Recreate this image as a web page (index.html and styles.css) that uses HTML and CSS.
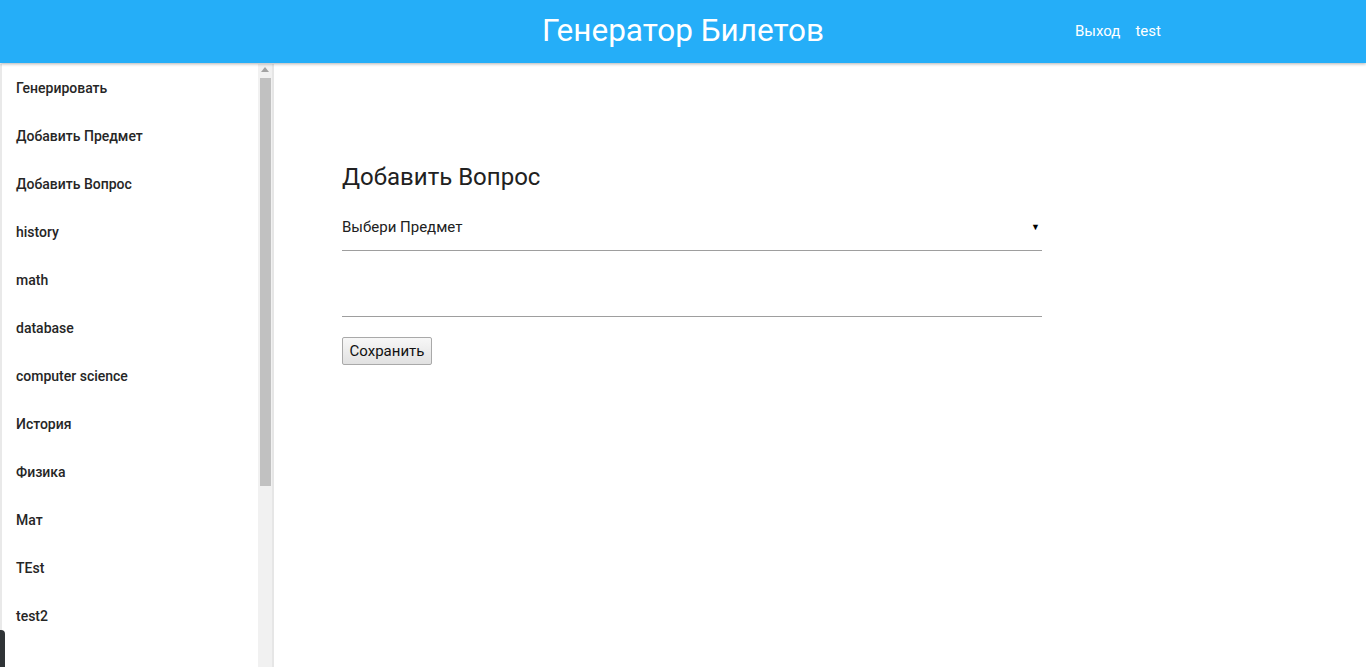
FILE: index.html
```html
<!DOCTYPE html>
<html lang="ru">
<head>
<meta charset="utf-8">
<title>Генератор Билетов</title>
<link rel="stylesheet" href="styles.css">
</head>
<body>
<header class="topbar">
  <div class="title">Генератор Билетов</div>
  <nav class="user-nav">
    <a class="nav-link" href="#">Выход</a>
    <span class="nav-link">test</span>
  </nav>
</header>
<div class="layout">
  <aside class="sidebar">
    <ul class="menu">
      <li class="menu-item">Генерировать</li>
      <li class="menu-item">Добавить Предмет</li>
      <li class="menu-item">Добавить Вопрос</li>
      <li class="menu-item">history</li>
      <li class="menu-item">math</li>
      <li class="menu-item">database</li>
      <li class="menu-item">computer science</li>
      <li class="menu-item">История</li>
      <li class="menu-item">Физика</li>
      <li class="menu-item">Мат</li>
      <li class="menu-item">TEst</li>
      <li class="menu-item">test2</li>
    </ul>
    <div class="scrollbar">
      <div class="scroll-up"></div>
      <div class="scroll-thumb"></div>
    </div>
  </aside>
  <main class="content">
    <h1 class="heading">Добавить Вопрос</h1>
    <div class="select-field">
      <span class="select-label">Выбери Предмет</span>
      <span class="select-arrow">▼</span>
    </div>
    <div class="text-field"></div>
    <button class="save-btn">Сохранить</button>
  </main>
</div>
<div class="corner-tab"></div>
</body>
</html>
```

FILE: styles.css
```css
* { box-sizing: border-box; }
html, body { margin: 0; padding: 0; height: 100%; overflow: hidden; }
body {
  font-family: Roboto, "Liberation Sans", Arial, sans-serif;
  color: #212121;
  background: #fff;
}
.topbar {
  height: 63px;
  background: #25aef8;
  color: #fff;
  display: flex;
  align-items: center;
  justify-content: center;
  position: relative;
  box-shadow: 0 1px 3px rgba(0,0,0,0.3);
  z-index: 2;
}
.title {
  font-size: 31.5px;
  font-weight: 400;
  margin-top: -2px;
}
.user-nav {
  position: absolute;
  left: 1075px;
  top: 0;
  height: 63px;
  display: flex;
  align-items: center;
  gap: 15px;
  font-size: 15px;
  margin-top: -1px;
}
.nav-link { color: #fff; text-decoration: none; }
.layout {
  display: flex;
  height: 604px;
  margin-top: 1px;
}
.sidebar {
  width: 274px;
  flex: none;
  display: flex;
  border-left: 2px solid #e9e9e9;
  border-right: 2px solid #e6e6e6;
  overflow: hidden;
}
.menu {
  list-style: none;
  margin: 0;
  padding: 0;
  flex: 1;
}
.menu-item {
  height: 48px;
  display: flex;
  align-items: center;
  padding-left: 14px;
  font-size: 14px;
  font-weight: 500;
  color: #262626;
}
.scrollbar {
  width: 14px;
  background: #f1f1f1;
  display: flex;
  flex-direction: column;
  align-items: center;
}
.scroll-up {
  width: 0;
  height: 0;
  margin-top: 3px;
  border-left: 4px solid transparent;
  border-right: 4px solid transparent;
  border-bottom: 5px solid #a3a3a3;
}
.scroll-thumb {
  width: 11px;
  height: 408px;
  margin-top: 6px;
  margin-left: 1px;
  background: #c1c1c1;
}
.content {
  flex: 1;
  padding: 97px 0 0 68px;
}
.heading {
  margin: 0;
  font-size: 24px;
  font-weight: 400;
  line-height: 32px;
  color: #212121;
}
.select-field {
  width: 700px;
  height: 58px;
  display: flex;
  align-items: center;
  justify-content: space-between;
  border-bottom: 1px solid #9e9e9e;
  padding-top: 10px;
  font-size: 15px;
}
.select-arrow {
  font-size: 9px;
  margin-right: 2px;
  color: #000;
}
.text-field {
  width: 700px;
  height: 66px;
  border-bottom: 1px solid #9e9e9e;
}
.save-btn {
  margin-top: 20px;
  width: 90px;
  height: 28px;
  font-family: Roboto, "Liberation Sans", Arial, sans-serif;
  font-size: 15px;
  color: #111;
  background: linear-gradient(#f7f7f7, #e1e1e1);
  border: 1px solid #a9a9a9;
  border-radius: 2px;
  padding: 0;
}
.corner-tab {
  position: fixed;
  left: 0;
  top: 630px;
  width: 5px;
  height: 40px;
  background: #2f3336;
  border-top-right-radius: 4px;
  z-index: 3;
}
```
